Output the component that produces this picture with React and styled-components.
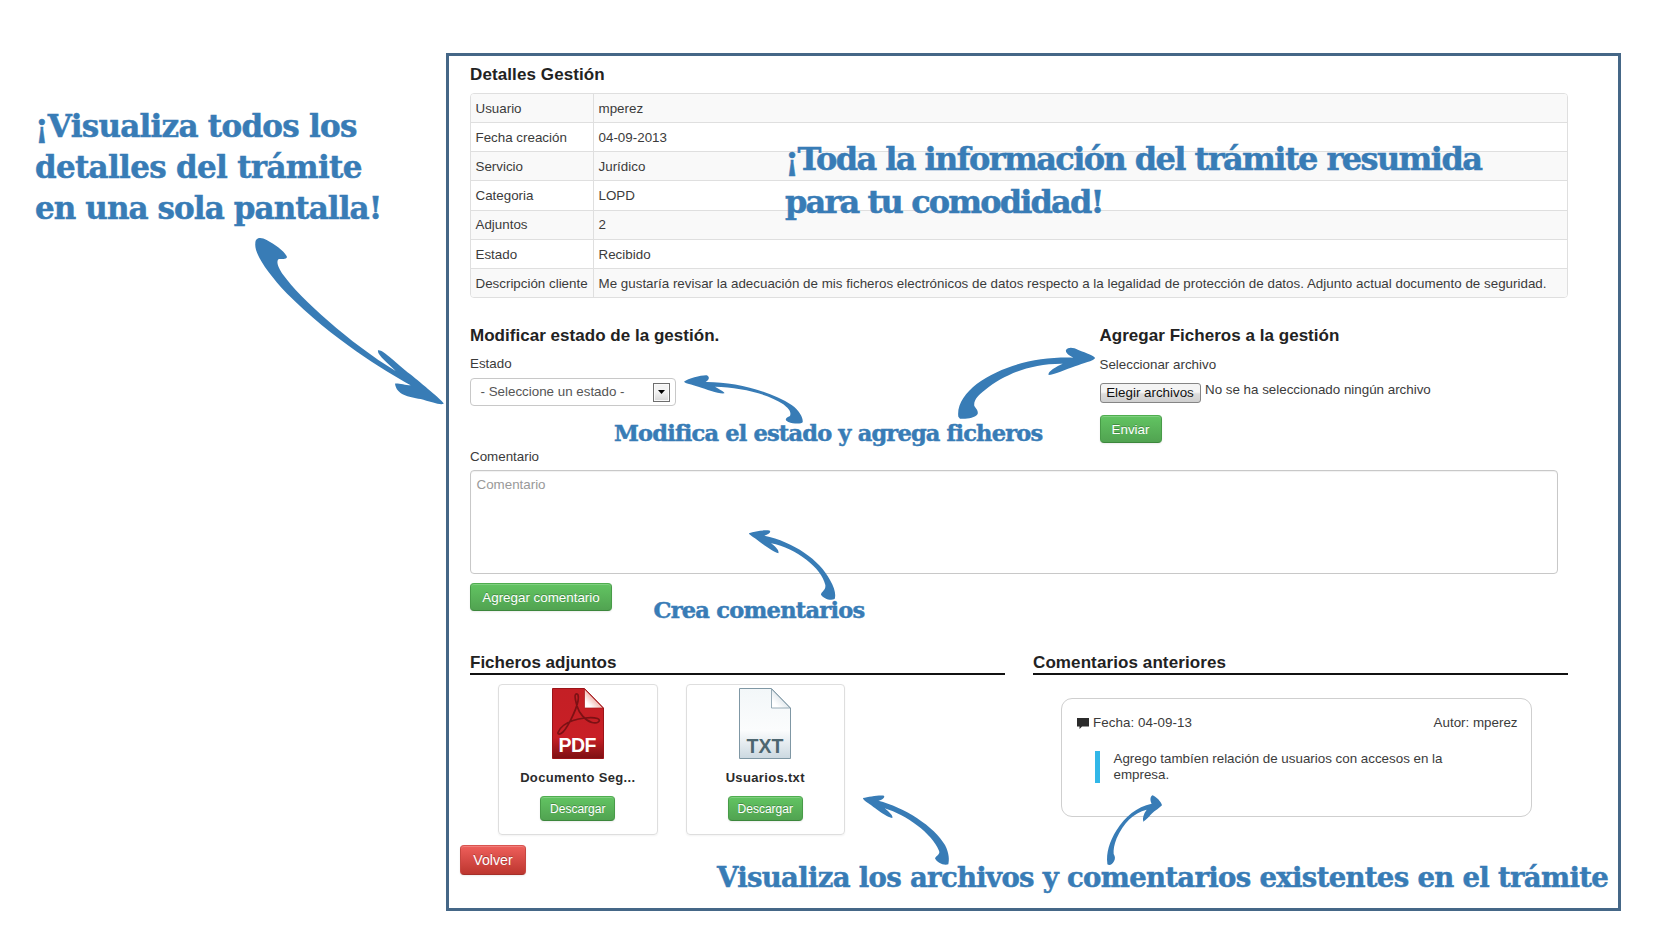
import React from "react";
import styled, { createGlobalStyle, css } from "styled-components";

const GlobalStyle = createGlobalStyle`
  * { box-sizing: border-box; }
  body { margin: 0; background: #fff; }
  button, select, input { font: inherit; letter-spacing: inherit; }
`;

const ink = "#387cb6";
const slab = `"DejaVu Serif", serif`;

const Page = styled.div`
  position: relative;
  width: 1680px;
  height: 925px;
  overflow: hidden;
  display: grid;
  grid-template-columns: 446px 1175px;
  align-items: start;
  font: 13.36px/20px "Liberation Sans", Arial, sans-serif;
  color: #3b3b3b;
`;

const Aside = styled.aside`
  padding: 106px 0 0 35px;
`;

const SlabLine = styled.div`
  font: bold ${(p) => p.$size}px/${(p) => p.$line}px ${slab};
  letter-spacing: ${(p) => p.$track}px;
  color: ${ink};
  -webkit-text-stroke: 0.5px ${ink};
  white-space: nowrap;
`;

const Frame = styled.main`
  margin-top: 53px;
  height: 858px;
  border: 3px solid #456787;
  background: #fff;
  padding: 9px 50px 0 21px;
`;

const Heading = styled.h2`
  margin: 0;
  font-size: 17px;
  line-height: 20px;
  font-weight: bold;
  letter-spacing: ${(p) => p.$track || 0}px;
  color: #222;
`;

const DetailList = styled.dl`
  margin: 8px 0 0;
  width: 1098px;
  height: 205px;
  display: flex;
  flex-direction: column;
  border: 1px solid #dfdfdf;
  border-radius: 4px;
  overflow: hidden;
`;

const DetailRow = styled.div`
  flex: 1;
  display: grid;
  grid-template-columns: 122px 1fr;
  background: #fff;
  &:nth-child(odd) { background: #f9f9f9; }
  & + & { border-top: 1px solid #dfdfdf; }
`;

const cell = css`
  margin: 0;
  display: flex;
  align-items: center;
  padding: 1.5px 0 0 4.5px;
  white-space: nowrap;
`;
const Term = styled.dt`${cell}`;
const Value = styled.dd`
  ${cell}
  letter-spacing: 0.012px;
  border-left: 1px solid #dfdfdf;
`;

const FormRow = styled.section`
  display: grid;
  grid-template-columns: 629.5px 1fr;
  height: 121px;
  margin-top: 28px;
`;

const FormColumn = styled.div`
  display: flex;
  flex-direction: column;
  align-items: flex-start;
`;

const Label = styled.label`
  display: block;
  margin-top: ${(p) => p.$top || 0}px;
`;

const SelectBox = styled.div`
  width: 206px;
  height: 28px;
  margin-top: 4px;
  padding: 0 5px 0 9.5px;
  display: flex;
  align-items: center;
  justify-content: space-between;
  border: 1px solid #c8c8c8;
  border-radius: 4px;
  color: #555;
`;

const SelectArrow = styled.span`
  width: 17px;
  height: 19px;
  display: flex;
  align-items: center;
  justify-content: center;
  border: 1px solid #6e6e6e;
  background: linear-gradient(#f3f3f3 45%, #d6d6d6);
  box-shadow: inset 0 0 0 1px #fafafa;
`;

const FilePicker = styled.div`
  display: flex;
  align-items: flex-start;
  gap: 4.5px;
  margin-top: 8px;
`;

const FileButton = styled.button`
  width: 101px;
  height: 20px;
  padding: 0;
  line-height: 18px;
  border: 1px solid #858585;
  border-radius: 3px;
  background: linear-gradient(#f4f4f4 45%, #dddddd 55%, #cfcfcf);
  color: #111;
`;

const FileStatus = styled.span`
  margin-top: -3.5px;
`;

const tones = {
  green: "linear-gradient(#62c462, #51a351)",
  red: "linear-gradient(#ee5f5b, #bd362f)",
};
const edges = {
  green: "#4fae4f #489b48 #3c873c",
  red: "#d9534f #c64640 #a52f29",
};

const Button = styled.button`
  display: block;
  width: ${(p) => p.$width}px;
  height: ${(p) => p.$height || 28}px;
  padding: 1px 0 0;
  border: 1px solid;
  border-color: ${(p) => edges[p.$tone || "green"]};
  border-radius: 4px;
  background: ${(p) => tones[p.$tone || "green"]};
  box-shadow: inset 0 1px 0 rgba(255, 255, 255, 0.2), 0 1px 2px rgba(0, 0, 0, 0.08);
  color: #fff;
  font-size: ${(p) => p.$font || 13.36}px;
  line-height: 1;
  text-shadow: 0 -1px 0 rgba(0, 0, 0, 0.25);
`;

const SendButton = styled(Button)`margin-top: 12px;`;
const CommentButton = styled(Button)`margin-top: 9px;`;
const BackButton = styled(Button)`margin: 10px 0 0 -10px;`;

const CommentBox = styled.div`
  width: 1088px;
  height: 104px;
  margin-top: 3px;
  padding: 3.5px 5.5px;
  border: 1px solid #c8c8c8;
  border-radius: 4px;
  box-shadow: inset 0 1px 1px rgba(0, 0, 0, 0.06);
  color: #999;
`;

const Panels = styled.section`
  display: grid;
  grid-template-columns: 535px 535px;
  column-gap: 28px;
  margin-top: 42px;
  height: 182px;
`;

const PanelHeading = styled(Heading)`
  height: 21.5px;
  border-bottom: 2px solid #111;
`;

const Files = styled.div`
  display: flex;
  gap: 28px;
  padding: 9px 0 0 28px;
`;

const FileCard = styled.article`
  width: 159.5px;
  height: 151.5px;
  padding-top: 3px;
  display: flex;
  flex-direction: column;
  align-items: center;
  border: 1px solid #dedede;
  border-radius: 4px;
  box-shadow: 0 1px 2px rgba(0, 0, 0, 0.05);
`;

const FileName = styled.div`
  margin: 9px 0 8.5px;
  font-size: 13px;
  font-weight: bold;
  letter-spacing: 0.34px;
  color: #2b2b2b;
`;

const CommentCard = styled.article`
  width: 471px;
  height: 118.5px;
  margin: 23.5px 0 0 28px;
  padding: 14px 13.5px 0 15px;
  border: 1px solid #cfcfcf;
  border-radius: 11px;
`;

const CommentMeta = styled.div`
  display: flex;
  align-items: center;
  justify-content: space-between;
`;

const CommentDate = styled.span`
  display: flex;
  align-items: center;
  gap: 4px;
  letter-spacing: 0.06px;
`;

const Quote = styled.blockquote`
  margin: 17.5px 0 0 17.5px;
  height: 32px;
  width: 362px;
  padding-left: 14px;
  border-left: 5px solid #31b7e8;
  line-height: 16px;
`;

const Caption = styled(SlabLine)`
  position: absolute;
  left: ${(p) => p.$x}px;
  top: ${(p) => p.$y}px;
`;

const ArrowLayer = styled.svg`
  position: absolute;
  left: 0;
  top: 0;
  pointer-events: none;
`;

const details = [
  ["Usuario", "mperez"],
  ["Fecha creación", "04-09-2013"],
  ["Servicio", "Jurídico"],
  ["Categoria", "LOPD"],
  ["Adjuntos", "2"],
  ["Estado", "Recibido"],
  [
    "Descripción cliente",
    "Me gustaría revisar la adecuación de mis ficheros electrónicos de datos respecto a la legalidad de protección de datos. Adjunto actual documento de seguridad.",
  ],
];

const arrows = [
  [0, 80, "M766 490C766 470 785 472 800 480C825 493 855 515 861 531C858 540 845 535 835 538C828 545 835 565 850 585C900 655 1050 790 1187 873C1165 850 1130 825 1134 811C1145 805 1190 850 1230 882C1270 915 1320 955 1331 970C1328 978 1290 965 1262 957C1225 950 1190 945 1185 911C1190 908 1215 915 1232 916C1150 870 1000 780 860 640C800 575 762 520 766 490Z"],
  [440, 310, "M732 215C745 205 785 195 800 196C810 200 808 210 797 216C880 215 990 242 1055 285C1080 303 1090 325 1088 337C1085 342 1060 342 1045 336C1030 330 1040 322 1050 318C1055 305 1045 295 1030 283C980 250 900 232 825 230C840 240 855 245 853 250C835 252 800 238 775 230C755 223 735 220 732 215Z"],
  [840, 310, "M355 320C350 285 375 250 410 222C490 165 590 140 700 143C690 138 675 130 678 120C685 110 700 112 715 120C740 130 765 137 765 145C760 153 730 160 705 169C680 178 640 195 626 195C622 185 645 172 668 161C570 160 490 195 435 240C415 256 400 270 403 288C410 298 415 303 413 312C405 325 375 328 360 326Z"],
  [440, 500, "M927 100C945 93 975 89 990 92C993 98 985 103 973 107C1060 125 1140 180 1170 240C1185 265 1188 285 1184 297C1170 303 1150 295 1143 284C1143 275 1158 272 1156 255C1145 205 1070 145 993 130C1010 143 1018 152 1015 160C1000 157 965 130 945 115C935 108 927 104 927 100Z"],
  [840, 690, "M69 324C85 320 120 314 132 317C136 323 125 330 115 332C190 350 285 410 315 465C328 490 328 510 325 523C312 528 290 518 285 505C288 497 302 493 297 482C275 430 200 375 134 355C150 368 160 378 157 384C140 383 100 350 85 340C75 333 68 328 69 324Z"],
  [840, 690, "M802 520C798 490 808 455 830 420C855 380 890 350 935 341C930 333 930 320 937 316C947 318 965 337 966 346C960 353 945 362 935 371C925 382 915 392 910 395C907 385 910 372 920 359C880 368 850 400 830 445C822 465 820 480 821 492C826 500 826 506 822 514C817 524 808 528 802 523Z"],
];

const PdfIcon = () => (
  <svg width="52" height="71" viewBox="0 0 52 71">
    <defs>
      <linearGradient id="pdf" x1="0" y1="0" x2="0" y2="1">
        <stop offset="0" stopColor="#c41f25" />
        <stop offset="0.7" stopColor="#c81f26" />
        <stop offset="1" stopColor="#7d1013" />
      </linearGradient>
      <linearGradient id="pdfFold" x1="0" y1="1" x2="1" y2="0">
        <stop offset="0.2" stopColor="#fff" />
        <stop offset="1" stopColor="#e0503c" />
      </linearGradient>
    </defs>
    <path d="M.5.5H32.5L51.5 20V70.5H.5Z" fill="url(#pdf)" stroke="#9b1418" />
    <path d="M32.5 1V20H51Z" fill="url(#pdfFold)" stroke="#a5171b" strokeWidth=".7" />
    <path
      d="M6 44.5C8 39 15 34.5 21 32.5C27 30.5 39 28.5 45.5 30.5C50 32.5 45.5 36 40 34.5C33 32.5 27 25 25 18C24 14 22 8 23.5 6.5C26 4.5 27 8 26 13C24 23 14 43 9 45.5C7 46.5 5.5 46 6 44.5Z"
      fill="none"
      stroke="#7c1114"
      strokeWidth="1.7"
    />
    <text x="25.5" y="64" textAnchor="middle" textLength="38" fontFamily="Liberation Sans" fontWeight="bold" fontSize="19.5" fill="#fff">PDF</text>
  </svg>
);

const TxtIcon = () => (
  <svg width="52" height="71" viewBox="0 0 52 71">
    <defs>
      <linearGradient id="txt" x1="0" y1="0" x2="0" y2="1">
        <stop offset="0" stopColor="#f3f7f9" />
        <stop offset="0.6" stopColor="#fbfcfd" />
        <stop offset="1" stopColor="#cbd8e0" />
      </linearGradient>
      <linearGradient id="txtFold" x1="0" y1="1" x2="1" y2="0">
        <stop offset="0.2" stopColor="#fff" />
        <stop offset="1" stopColor="#b9cad4" />
      </linearGradient>
    </defs>
    <path d="M.5.5H32.5L51.5 20V70.5H.5Z" fill="url(#txt)" stroke="#7f97a4" />
    <path d="M32.5 1V20H51Z" fill="url(#txtFold)" stroke="#7f97a4" strokeWidth=".8" />
    <text x="26" y="64.5" textAnchor="middle" textLength="37" fontFamily="Liberation Sans" fontWeight="bold" fontSize="19.5" fill="#4d6670">TXT</text>
  </svg>
);

export default function App() {
  return (
    <>
      <GlobalStyle />
      <Page>
        <Aside>
          <SlabLine $size={31} $line={40.75} $track={-0.74}>¡Visualiza todos los</SlabLine>
          <SlabLine $size={31} $line={40.75} $track={-0.7}>detalles del trámite</SlabLine>
          <SlabLine $size={31} $line={40.75} $track={-0.92}>en una sola pantalla!</SlabLine>
        </Aside>
        <Frame>
          <Heading $track={0.1}>Detalles Gestión</Heading>
          <DetailList>
            {details.map(([term, value]) => (
              <DetailRow key={term}>
                <Term>{term}</Term>
                <Value>{value}</Value>
              </DetailRow>
            ))}
          </DetailList>

          <FormRow>
            <FormColumn>
              <Heading $track={0.03}>Modificar estado de la gestión.</Heading>
              <Label $top={8}>Estado</Label>
              <SelectBox>
                - Seleccione un estado -
                <SelectArrow>
                  <svg width="7" height="4" viewBox="0 0 7 4"><path d="M0 0H7L3.5 4Z" fill="#000" /></svg>
                </SelectArrow>
              </SelectBox>
            </FormColumn>
            <FormColumn>
              <Heading $track={0.03}>Agregar Ficheros a la gestión</Heading>
              <Label $top={9}>Seleccionar archivo</Label>
              <FilePicker>
                <FileButton>Elegir archivos</FileButton>
                <FileStatus>No se ha seleccionado ningún archivo</FileStatus>
              </FilePicker>
              <SendButton $width={62}>Enviar</SendButton>
            </FormColumn>
          </FormRow>

          <Label>Comentario</Label>
          <CommentBox>Comentario</CommentBox>
          <CommentButton $width={142}>Agregar comentario</CommentButton>

          <Panels>
            <section>
              <PanelHeading>Ficheros adjuntos</PanelHeading>
              <Files>
                <FileCard>
                  <PdfIcon />
                  <FileName>Documento Seg...</FileName>
                  <Button $width={75} $height={25} $font={12}>Descargar</Button>
                </FileCard>
                <FileCard>
                  <TxtIcon />
                  <FileName>Usuarios.txt</FileName>
                  <Button $width={75} $height={25} $font={12}>Descargar</Button>
                </FileCard>
              </Files>
            </section>
            <section>
              <PanelHeading $track={0.1}>Comentarios anteriores</PanelHeading>
              <CommentCard>
                <CommentMeta>
                  <CommentDate>
                    <svg width="12" height="11" viewBox="0 0 12 11"><path d="M0 0H12V8.5H5L2.5 11V8.5H0Z" fill="#2b2b2b" /></svg>
                    Fecha: 04-09-13
                  </CommentDate>
                  <span>Autor: mperez</span>
                </CommentMeta>
                <Quote>Agrego tambíen relación de usuarios con accesos en la empresa.</Quote>
              </CommentCard>
            </section>
          </Panels>
          <BackButton $tone="red" $width={66} $height={30} $font={14.2}>Volver</BackButton>
        </Frame>

        <ArrowLayer width="1680" height="925">
          {arrows.map(([x, y, d]) => (
            <path key={d} d={d} fill={ink} transform={`translate(${x} ${y}) scale(0.33333)`} />
          ))}
        </ArrowLayer>
        <Caption $x={785} $y={138} $size={32} $line={43} $track={-1.59}>¡Toda la información del trámite resumida</Caption>
        <Caption $x={785} $y={181} $size={32} $line={43} $track={-1.86}>para tu comodidad!</Caption>
        <Caption $x={614} $y={419.5} $size={22.5} $line={26} $track={-0.81}>Modifica el estado y agrega ficheros</Caption>
        <Caption $x={653.5} $y={596.5} $size={22.5} $line={26} $track={-0.74}>Crea comentarios</Caption>
        <Caption $x={717} $y={860.5} $size={27.5} $line={32} $track={-0.67}>Visualiza los archivos y comentarios existentes en el trámite</Caption>
      </Page>
    </>
  );
}
